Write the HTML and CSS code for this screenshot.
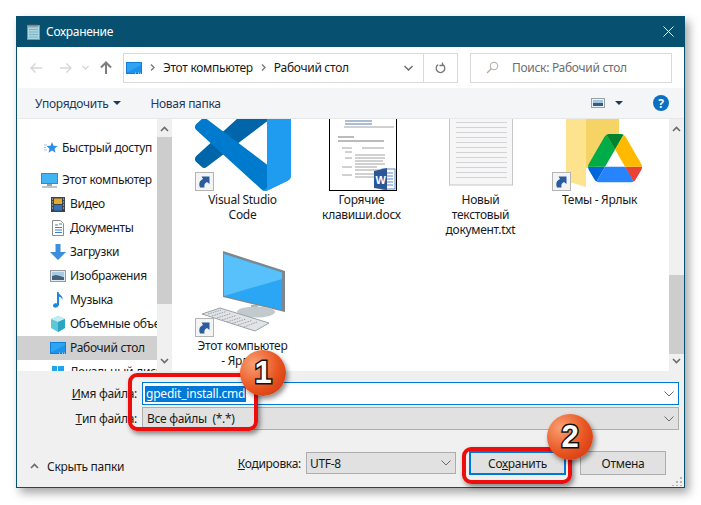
FILE: index.html
```html
<!DOCTYPE html>
<html lang="ru">
<head>
  <meta charset="UTF-8">
  <title>Сохранение</title>
  <link rel="stylesheet" href="styles.css">
</head>
<body>
  <svg class="sprites" width="0" height="0">
    <symbol id="shortcut" viewBox="0 0 19 19">
      <rect x="0.5" y="0.5" width="18" height="18" fill="#f4f4f4" stroke="#b4b4b4"/>
      <path d="M5 15.500c-1.500-4-.5-7 3-8.500l-1.500-2.500h8v7.500l-2.500-2c-2.500 1-3 3-2.500 5.500z" fill="#2b5c9e"/>
    </symbol>
    <symbol id="screen" viewBox="0 0 16 14">
      <rect x="0" y="1" width="16" height="12" fill="#0f7fd8"/>
      <rect x="1" y="2" width="14" height="9.500" fill="#2fa4f5"/>
      <path d="M1 11.500L15 4v7.500z" fill="#1c92ea"/>
      <path d="M9 12.200h1m2 0h1m1 0h1" stroke="#fff" stroke-width=".8"/>
    </symbol>
  </svg>

  <div class="dialog">
    <div class="titlebar">
      <svg class="title-icon" width="15" height="16" viewBox="0 0 15 16">
        <rect x="1.500" y="1.500" width="12" height="14" fill="#a9d6dc" stroke="#9a8f74"/>
        <path d="M3 5.500h9M3 8h9M3 10.500h9M3 13h9" stroke="#7fb3c4"/>
        <path d="M3 .5v3m2-3v3m2-3v3m2-3v3m2-3v3" stroke="#777"/>
      </svg>
      <span class="title-text">Сохранение</span>
      <svg class="close-icon" width="11" height="11" viewBox="0 0 11 11">
        <path d="M.5 .5l10 10M10.500 .5l-10 10" stroke="#fff" stroke-width="1"/>
      </svg>
    </div>

    <div class="navbar">
      <div class="nav-buttons">
        <svg width="14" height="12" viewBox="0 0 14 12"><path d="M13 6H2M6.500 1.500L2 6l4.500 4.500" class="arrow-off"/></svg>
        <svg width="14" height="12" viewBox="0 0 14 12"><path d="M1 6h11M7.500 1.500L12 6l-4.500 4.500" class="arrow-off"/></svg>
        <svg width="7" height="5" viewBox="0 0 7 5"><path d="M.5 1l3 3 3-3" class="arrow-off"/></svg>
        <svg width="12" height="13" viewBox="0 0 12 13"><path d="M6 13V2M1 6.500L6 1.500l5 5" class="arrow-on"/></svg>
      </div>
      <div class="address">
        <svg class="address-icon" width="16" height="14"><use href="#screen"/></svg>
        <svg class="crumb-sep" width="5" height="7" viewBox="0 0 5 7"><path d="M1 .5l3 3-3 3" class="crumb-arrow"/></svg>
        <span>Этот компьютер</span>
        <svg class="crumb-sep" width="5" height="7" viewBox="0 0 5 7"><path d="M1 .5l3 3-3 3" class="crumb-arrow"/></svg>
        <span>Рабочий стол</span>
        <svg class="address-drop" width="9" height="6" viewBox="0 0 9 6"><path d="M.5 1l4 4 4-4" class="drop-dark"/></svg>
        <div class="refresh">
          <svg width="11" height="12" viewBox="0 0 11 12"><path d="M7.800 2.600a4.300 4.300 0 1 1-4.600 0M7.500 .5v3h-3" fill="none" stroke="#777" stroke-width="1.300"/></svg>
        </div>
      </div>
      <div class="search">
        <svg width="13" height="13" viewBox="0 0 13 13"><circle cx="8" cy="5" r="3.800" fill="none" stroke="#b5a99a"/><path d="M5.300 7.800L1 12" stroke="#b5a99a" stroke-width="1.200"/></svg>
        <span>Поиск: Рабочий стол</span>
      </div>
    </div>

    <div class="toolbar">
      <span class="tool">Упорядочить</span>
      <span class="caret"></span>
      <span class="tool tool-new">Новая папка</span>
      <svg class="view-icon" width="14" height="10" viewBox="0 0 14 10">
        <rect x=".5" y=".5" width="13" height="9" fill="#eaf2f8" stroke="#a0a0a0"/>
        <rect x="2" y="2" width="10" height="3" fill="#9cc6e4"/>
        <rect x="2" y="5" width="10" height="3" fill="#3c5a76"/>
      </svg>
      <span class="caret view-caret"></span>
      <span class="help">?</span>
    </div>

    <div class="main">
      <nav class="tree">
        <div class="tree-row tree-top">
          <svg width="14" height="14" viewBox="0 0 14 14"><path d="M8 1l1.500 3.800 4 .3-3 2.600 1 4L8 9.500 4.500 11.700l1-4-3-2.600 4-.3z" fill="#2f8fe0"/><path d="M0 4h3M0 6.500h2M0 9h3" stroke="#9cc8ec"/></svg>
          <span>Быстрый доступ</span>
        </div>
        <div class="tree-row tree-pc">
          <svg width="17" height="15" viewBox="0 0 17 15"><rect x=".5" y=".5" width="16" height="10" fill="#41b4f4" stroke="#5f7f92"/><path d="M6 11h5v2H6z" fill="#9aa6ad"/><path d="M1 14h15" stroke="#a9b2b8" stroke-width="1.500"/></svg>
          <span>Этот компьютер</span>
        </div>
        <div class="tree-row child">
          <svg width="14" height="15" viewBox="0 0 14 15"><rect width="14" height="15" fill="#3a4350"/><rect x="3" y="1.500" width="8" height="5.500" fill="#e4a92a"/><rect x="3" y="8" width="8" height="5.500" fill="#3273b8"/><path d="M1 2h1M1 5h1M1 8h1M1 11h1M12 2h1M12 5h1M12 8h1M12 11h1" stroke="#ddd"/></svg>
          <span>Видео</span>
        </div>
        <div class="tree-row child">
          <svg width="14" height="16" viewBox="0 0 14 16"><path d="M1.500 .5h8l3 3v12h-11z" fill="#fff" stroke="#8d8d8d"/><path d="M4 5h3M8 4h3M4 7.500h7M4 10h7M4 12.500h7" stroke="#3d83c4"/></svg>
          <span>Документы</span>
        </div>
        <div class="tree-row child">
          <svg width="16" height="16" viewBox="0 0 16 16"><path d="M5.500 0h5v8H16l-8 8-8-8h5.500z" fill="#3c8fdc"/></svg>
          <span>Загрузки</span>
        </div>
        <div class="tree-row child">
          <svg width="16" height="12" viewBox="0 0 16 12"><rect x=".5" y=".5" width="15" height="11" fill="#dfeaf2" stroke="#9a9a9a"/><rect x="2" y="2" width="12" height="4" fill="#a8cbe4"/><path d="M2 6l4-1 8 2v3H2z" fill="#45617c"/></svg>
          <span>Изображения</span>
        </div>
        <div class="tree-row child">
          <svg width="14" height="16" viewBox="0 0 14 16"><path d="M6 0h1.500c.5 3 5 3.500 4 8-.5-2-2-3-3.500-3.300V12.500C8 15 5 16 3.500 15.500 1.500 15 1.500 12.500 3.500 11.500c1-.5 2-.4 2.500 0z" fill="#1e87e0"/></svg>
          <span>Музыка</span>
        </div>
        <div class="tree-row child">
          <svg width="16" height="16" viewBox="0 0 16 16"><path d="M8 0l7 3v9l-7 4-7-4V3z" fill="#5fc7d8"/><path d="M1 3l7 3 7-3-7-3z" fill="#bdeef3"/><path d="M8 6l7-3v9l-7 4z" fill="#2ba5c2"/></svg>
          <span>Объемные объекты</span>
        </div>
        <div class="tree-row child selected">
          <svg width="16" height="14"><use href="#screen"/></svg>
          <span>Рабочий стол</span>
        </div>
        <div class="tree-row child">
          <svg width="14" height="14" viewBox="0 0 14 14"><path d="M1 1h5v5H1zM7 1h6v5H7zM1 7h5v6H1zM7 7h6v6H7z" fill="#20a4ea"/></svg>
          <span>Локальный диск (C:)</span>
        </div>
      </nav>

      <div class="scrollbar">
        <svg width="9" height="6" viewBox="0 0 9 6"><path d="M1 5l3.500-3.500L8 5" class="scroll-arrow"/></svg>
        <div class="track track-left"><div class="thumb"></div></div>
        <svg width="9" height="6" viewBox="0 0 9 6"><path d="M1 1l3.500 3.500L8 1" class="scroll-arrow"/></svg>
      </div>

      <div class="files">
        <div class="items">
          <div class="item">
            <svg class="item-icon" width="96" height="96" viewBox="0 0 96 96">
              <g transform="scale(.96)">
                <path d="M96.460 10.800L75.860.87a6.230 6.230 0 0 0-7.100 1.210L1.340 63.580a4.170 4.170 0 0 0 0 6.160l5.510 5.010a4.170 4.170 0 0 0 5.320.24L93.380 13.570C96.100 11.500 100 13.450 100 16.870v-.24a6.250 6.250 0 0 0-3.540-5.830z" fill="#0065a9"/>
                <path d="M96.460 89.200L75.860 99.130a6.230 6.230 0 0 1-7.100-1.210L1.340 36.420a4.170 4.170 0 0 1 0-6.160l5.510-5.010a4.170 4.170 0 0 1 5.320-.24L93.380 86.430c2.720 2.070 6.620.12 6.620-3.300v.24a6.250 6.250 0 0 1-3.540 5.830z" fill="#007acc"/>
                <path d="M75.860 99.130a6.230 6.230 0 0 1-7.100-1.210c2.300 2.300 6.240.67 6.240-2.590V4.670c0-3.260-3.940-4.890-6.240-2.590a6.230 6.230 0 0 1 7.100-1.210l20.600 9.900A6.250 6.250 0 0 1 100 16.400v67.200a6.250 6.250 0 0 1-3.540 5.630z" fill="#1f9cf0"/>
              </g>
              <use href="#shortcut" x="0" y="77" width="19" height="19"/>
            </svg>
            <div class="item-label">Visual Studio Code</div>
          </div>

          <div class="item">
            <svg class="item-icon" width="96" height="96" viewBox="0 0 96 96">
              <rect x="15.500" y="-1" width="67" height="96.500" fill="#fff" stroke="#000"/>
              <path d="M31 26h27M31 29h27" stroke="#2b5797" stroke-width=".8"/>
              <path d="M24 42h16M24 46h46" stroke="#555" stroke-width=".8"/>
              <path d="M30 32h50M28 53h10M48 53h22M31 57h7M31 63h7M41 60h30M41 63h30M41 66h28M41 69h30M41 72h22M41 75h26M28 72h10M28 80h10M41 79h22M41 82h22" stroke="#8a8a8a" stroke-width=".8"/>
              <rect x="68" y="74" width="13" height="20" fill="#fff" stroke="#5a86c0"/>
              <path d="M71 78h8M71 81h8M71 84h8M71 87h8M71 90h8" stroke="#5a86c0"/>
              <path d="M60 76l13-3v22l-13-2z" fill="#2b5797"/>
              <text x="61.500" y="89" class="word-letter">W</text>
            </svg>
            <div class="item-label">Горячие клавиши.docx</div>
          </div>

          <div class="item">
            <svg class="item-icon" width="96" height="96" viewBox="0 0 96 96">
              <rect x="16.500" y="-1" width="63" height="91" fill="#f6f6f6" stroke="#c6c6c6"/>
              <path d="M23 27.500h51M23 32.500h51M23 37.500h51M23 42.500h51M23 47.500h51M23 52.500h51M23 57.500h51M23 62.500h51M23 67.500h51M23 72.500h51M23 77.500h51M23 82.500h51" stroke="#d4d4d8"/>
            </svg>
            <div class="item-label">Новый<br>текстовый документ.txt</div>
          </div>

          <div class="item">
            <svg class="item-icon" width="96" height="96" viewBox="0 0 96 96">
              <path d="M34 0h33v50L42 73h-8z" fill="#f5d364"/>
              <path d="M14 0h20v92l-20-6z" fill="#fee38f"/>
              <g transform="translate(36 39) scale(.62)">
                <path d="M6.600 66.850l3.850 6.650c.8 1.400 1.950 2.500 3.300 3.300l13.750-23.800H0c0 1.550.4 3.100 1.200 4.500z" fill="#0066da"/>
                <path d="M43.650 25L29.900 1.200c-1.350.8-2.500 1.900-3.300 3.300l-25.400 44A9.060 9.060 0 0 0 0 53h27.500z" fill="#00ac47"/>
                <path d="M73.550 76.800c1.350-.8 2.500-1.900 3.300-3.300l1.600-2.750 7.650-13.250c.8-1.400 1.200-2.950 1.200-4.500H59.798l5.852 11.500z" fill="#ea4335"/>
                <path d="M43.650 25L57.400 1.200C56.050.4 54.500 0 52.900 0H34.400c-1.600 0-3.150.45-4.500 1.200z" fill="#00832d"/>
                <path d="M59.800 53H27.500L13.750 76.800c1.350.8 2.900 1.200 4.500 1.200h50.800c1.600 0 3.150-.45 4.500-1.200z" fill="#2684fc"/>
                <path d="M73.400 26.500l-12.700-22c-.8-1.400-1.950-2.500-3.300-3.300L43.650 25 59.800 53h27.450c0-1.550-.4-3.100-1.200-4.500z" fill="#ffba00"/>
              </g>
              <use href="#shortcut" x="0" y="77" width="19" height="19"/>
            </svg>
            <div class="item-label">Темы - Ярлык</div>
          </div>

          <div class="item">
            <svg class="item-icon" width="96" height="96" viewBox="0 0 96 96">
              <path d="M28 10l62 20v41l-62-15z" fill="#7d888e"/>
              <path d="M29 13l58 18.500v37.500L29 55z" fill="#2ba6f4"/>
              <path d="M29 55V13l58 18.500V38z" fill="#58c0fa"/>
              <path d="M56 64h7v7h-7z" fill="#aab4ba"/>
              <ellipse cx="61" cy="71" rx="19" ry="5.500" fill="#c2cace"/>
              <path d="M7 73l18-6 49 15-14 8z" fill="#e0e4e6" stroke="#9aa2a6"/>
              <path d="M13 73l13-4M17 75l14-4.500M22 77l14-4.500M27 79l14-4.500M32 81l14-4.500M37 82.500l14-4.500M43 84l14-4.500M49 86l13-5" stroke="#9aa1a5" stroke-dasharray="1.500 1"/>
              <use href="#shortcut" x="0" y="77" width="19" height="19"/>
            </svg>
            <div class="item-label">Этот компьютер - Ярлык</div>
          </div>
        </div>
      </div>

      <div class="scrollbar">
        <svg width="9" height="6" viewBox="0 0 9 6"><path d="M1 5l3.500-3.500L8 5" class="scroll-arrow"/></svg>
        <div class="track track-right"><div class="thumb"></div></div>
        <svg width="9" height="6" viewBox="0 0 9 6"><path d="M1 1l3.500 3.500L8 1" class="scroll-arrow"/></svg>
      </div>
    </div>

    <div class="bottom">
      <div class="fields">
        <label class="field-label"><u>И</u>мя файла:</label>
        <div class="filename">
          <span class="picked">gpedit_install.cmd</span>
          <svg width="10" height="6" viewBox="0 0 10 6"><path d="M.5 .5L5 5 9.500 .5" class="drop-thin"/></svg>
        </div>
        <label class="field-label"><u>Т</u>ип файла:</label>
        <div class="combo combo-wide">
          <span>Все файлы&nbsp; (*.*)</span>
          <svg width="10" height="6" viewBox="0 0 10 6"><path d="M.5 .5L5 5 9.500 .5" class="drop-thin"/></svg>
        </div>
      </div>

      <div class="actions">
        <svg class="hide-arrow" width="9" height="6" viewBox="0 0 9 6"><path d="M1 5l3.500-3.500L8 5" class="scroll-arrow"/></svg>
        <span class="hide-folders">Скрыть папки</span>
        <label class="encoding-label"><u>К</u>одировка:</label>
        <div class="combo combo-encoding">
          <span>UTF-8</span>
          <svg width="10" height="6" viewBox="0 0 10 6"><path d="M.5 .5L5 5 9.500 .5" class="drop-thin"/></svg>
        </div>
        <button class="btn btn-save">Со<u>х</u>ранить</button>
        <button class="btn btn-cancel">Отмена</button>
      </div>

      <svg class="gripper" width="10" height="10" viewBox="0 0 10 10"><path d="M8 1h2v2H8zM4 5h2v2H4zM8 5h2v2H8zM0 9h2v2H0zM4 9h2v2H4zM8 9h2v2H8z" fill="#b5b5b5"/></svg>
    </div>
  </div>

  <!-- annotations drawn over the screenshot -->
  <div class="mark mark-one"></div>
  <div class="mark mark-two"></div>
  <div class="badge badge-one">1</div>
  <div class="badge badge-two">2</div>
</body>
</html>
```

FILE: styles.css
```css
html, body {
  margin: 0;
  padding: 0;
  background: #ffffff;
  color: #1a1a1a;
  font-family: "Noto Sans", "Open Sans", sans-serif;
  font-size: 12px;
  letter-spacing: -0.3px;
  height: 100vh;
  overflow: hidden;
}
.sprites {
  position: absolute;
}
svg {
  flex: none;
  display: block;
}
.dialog {
  display: flex;
  flex-direction: column;
  box-sizing: border-box;
  width: 669px;
  height: 472px;
  margin: 16px 0 0 16px;
  border: 1px solid #08506f;
  border-top: none;
  background: #f0f0f0;
  box-shadow: 4px 5px 9px rgba(0, 0, 0, 0.35);
}
.titlebar {
  display: flex;
  align-items: center;
  height: 31px;
  flex: none;
  padding-left: 9px;
  background: #08506f;
  color: #ffffff;
}
.title-text {
  margin-left: 5px;
}
.close-icon {
  margin-left: auto;
  margin-right: 10px;
}
.navbar {
  display: flex;
  align-items: center;
  height: 41px;
  flex: none;
  background: #ffffff;
}
.nav-buttons {
  display: flex;
  align-items: center;
  width: 106px;
  flex: none;
}
.nav-buttons svg:nth-child(1) { margin-left: 12px; }
.nav-buttons svg:nth-child(2) { margin-left: 16px; }
.nav-buttons svg:nth-child(3) { margin-left: 9px; }
.nav-buttons svg:nth-child(4) { margin-left: 11px; }
.arrow-off {
  fill: none;
  stroke: #d6d6d6;
  stroke-width: 1.4;
}
.arrow-on {
  fill: none;
  stroke: #7d7d7d;
  stroke-width: 2;
}
.address {
  display: flex;
  align-items: center;
  box-sizing: border-box;
  width: 335px;
  height: 30px;
  padding-left: 2px;
  border: 1px solid #d9d9d9;
}
.crumb-sep {
  margin: 0 8px;
}
.crumb-arrow {
  fill: none;
  stroke: #7a7a7a;
  stroke-width: 1.4;
}
.address-drop {
  margin-left: auto;
  margin-right: 10px;
}
.drop-dark {
  fill: none;
  stroke: #6e6e6e;
  stroke-width: 1.5;
}
.refresh {
  display: flex;
  align-items: center;
  justify-content: center;
  align-self: stretch;
  width: 33px;
  border-left: 1px solid #d9d9d9;
}
.search {
  display: flex;
  align-items: center;
  box-sizing: border-box;
  width: 202px;
  height: 30px;
  margin-left: 12px;
  padding-left: 15px;
  border: 1px solid #d9d9d9;
  color: #6d6d6d;
}
.search span {
  margin-left: 13px;
}
.toolbar {
  display: flex;
  align-items: center;
  height: 31px;
  flex: none;
  padding-left: 18px;
  background: #f4f5f7;
  border-bottom: 1px solid #e8e8e8;
  box-sizing: border-box;
  color: #1e3a5c;
}
.caret {
  width: 0;
  height: 0;
  margin-left: 5px;
  border-left: 4px solid transparent;
  border-right: 4px solid transparent;
  border-top: 4px solid #1e3a5c;
}
.tool-new {
  margin-left: 29px;
}
.view-icon {
  margin-left: auto;
}
.view-caret {
  margin-left: 10px;
}
.help {
  display: flex;
  align-items: center;
  justify-content: center;
  width: 16px;
  height: 16px;
  margin: 0 15px 0 30px;
  border-radius: 50%;
  background: #0b6fc2;
  color: #ffffff;
  font-weight: bold;
  font-size: 12px;
}
.main {
  display: flex;
  height: 252px;
  flex: none;
  background: #ffffff;
}
.tree {
  width: 140px;
  flex: none;
  overflow: hidden;
}
.tree-row {
  display: flex;
  align-items: center;
  height: 24px;
  white-space: nowrap;
  padding-left: 33px;
  gap: 4px;
}
.tree-row > svg {
  width: 16px;
}
.tree-row > span {
  margin-bottom: 2px;
}
.tree-top {
  margin-top: 17px;
  padding-left: 26px;
  gap: 3px;
}
.tree-pc {
  margin-top: 8px;
  padding-left: 24px;
}
.tree-pc > svg {
  width: 17px;
}
.selected {
  background: #d0d0d0;
}
.scrollbar {
  display: flex;
  flex-direction: column;
  align-items: center;
  justify-content: space-between;
  width: 15px;
  flex: none;
  padding: 7px 0;
  box-sizing: border-box;
  background: #f0f0f0;
}
.track {
  flex: 1;
  align-self: stretch;
}
.track-left .thumb {
  margin-top: 5px;
  height: 167px;
  background: #cdcdcd;
}
.track-right .thumb {
  margin-top: 143px;
  height: 79px;
  background: #cdcdcd;
}
.scroll-arrow {
  fill: none;
  stroke: #6a6a6a;
  stroke-width: 1.6;
}
.files {
  flex: 1;
  overflow: hidden;
  padding-left: 11px;
}
.items {
  display: grid;
  grid-template-columns: repeat(4, 119px);
  margin-top: -24px;
}
.item {
  height: 146px;
}
.item-icon {
  margin: 0 auto;
  overflow: hidden;
}
.item-label {
  width: 92px;
  margin: 1px auto 0;
  text-align: center;
  line-height: 15px;
}
.word-letter {
  fill: #ffffff;
  font-family: "Liberation Sans", sans-serif;
  font-weight: bold;
  font-size: 11px;
}
.bottom {
  position: relative;
  flex: 1;
}
.fields {
  display: grid;
  grid-template-columns: 120px 1fr;
  column-gap: 5px;
  row-gap: 2px;
  padding: 11px 5px 0 0;
}
.field-label {
  display: flex;
  align-items: center;
  justify-content: flex-end;
}
.filename, .combo {
  display: flex;
  align-items: center;
  justify-content: space-between;
  box-sizing: border-box;
  height: 23px;
  padding: 0 4px 0 2px;
  border: 1px solid #adadad;
  background: #e1e1e1;
}
.filename {
  border-color: #0078d7;
  background: #ffffff;
}
.picked {
  background: #0078d7;
  color: #ffffff;
  line-height: 16px;
  padding: 0 1px;
  letter-spacing: -0.2px;
}
.combo-wide {
  padding-left: 4px;
}
.actions {
  display: flex;
  align-items: center;
  height: 24px;
  margin-top: 21px;
  padding-right: 18px;
}
.hide-arrow {
  margin: 6px 0 0 13px;
}
.hide-folders {
  margin: 6px 0 0 8px;
}
.encoding-label {
  margin-left: auto;
}
.combo-encoding {
  width: 150px;
  height: 22px;
  margin-left: 5px;
}
.combo-encoding span {
  margin-left: 1px;
}
.btn {
  box-sizing: border-box;
  height: 24px;
  padding: 0;
  background: #e1e1e1;
  border: 1px solid #adadad;
  color: #1a1a1a;
  font: inherit;
  letter-spacing: inherit;
}
.btn-save {
  width: 97px;
  margin-left: 13px;
  border: 2px solid #0078d7;
}
.btn-cancel {
  width: 86px;
  margin-left: 14px;
}
.drop-thin {
  fill: none;
  stroke: #6a6a6a;
  stroke-width: 1;
}
.gripper {
  position: absolute;
  right: 2px;
  bottom: 1px;
}
.mark {
  position: absolute;
  box-sizing: border-box;
  border: 4px solid #ee0d0d;
  border-radius: 9px;
  box-shadow: 2px 3px 5px rgba(0, 0, 0, 0.45);
}
.mark-one {
  left: 128px;
  top: 373px;
  width: 130px;
  height: 58px;
}
.mark-two {
  left: 462px;
  top: 447px;
  width: 110px;
  height: 37px;
}
.badge {
  position: absolute;
  display: flex;
  align-items: center;
  justify-content: center;
  width: 46px;
  height: 46px;
  border-radius: 50%;
  background: radial-gradient(circle at 30% 30%, #f9a074, #e8541f 55%, #c9300f);
  box-shadow: 2px 3px 5px rgba(0, 0, 0, 0.45);
  color: #ffffff;
  font-family: "Liberation Sans", sans-serif;
  font-weight: bold;
  font-size: 31px;
  letter-spacing: 0;
  -webkit-text-stroke: 3px #111111;
  paint-order: stroke fill;
}
.badge-one {
  left: 240px;
  top: 350px;
}
.badge-two {
  left: 547px;
  top: 414px;
}
```
